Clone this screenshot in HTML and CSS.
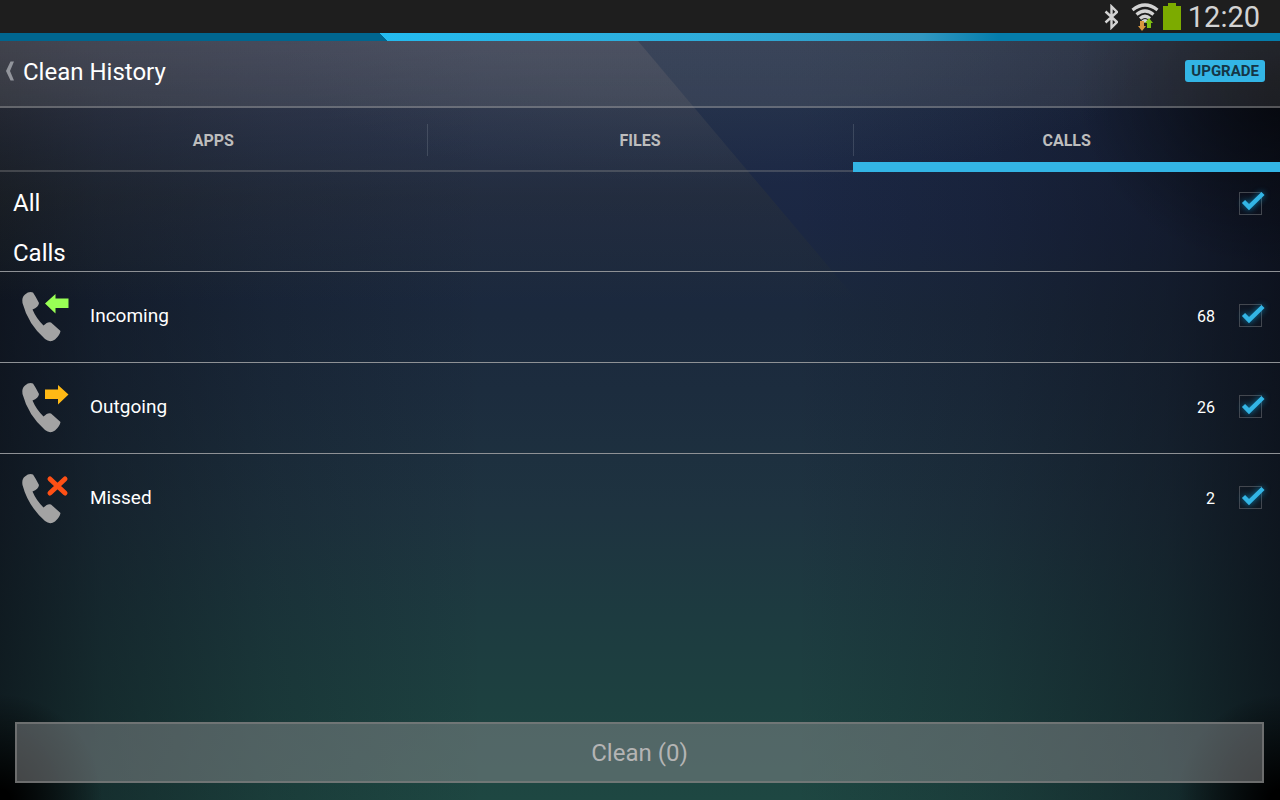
FILE: index.html
```html
<!DOCTYPE html>
<html lang="en">
<head>
<meta charset="utf-8">
<meta name="viewport" content="width=device-width, initial-scale=1">
<title>Clean History</title>
<link rel="stylesheet" href="styles.css">
</head>
<body>
<svg class="defs" width="0" height="0" aria-hidden="true">
  <defs>
    <symbol id="phone" viewBox="0 0 52 54">
      <path d="M7 5.500Q11 2 15 3.500Q18 8 21 14Q20.500 18 14.500 20.500Q18 29 25.500 36.500Q30 32 33 33.500L42.500 42Q42 46 37 50.500Q32 54 27 50Q10 35 4.500 14Q3.500 8 7 5.500Z" fill="#a3a3a3"/>
    </symbol>
    <symbol id="check" viewBox="0 0 36 36">
      <path d="M11.500 16.500L17 22L31 8.500" fill="none" stroke="#33b5e5" stroke-width="4.500"/>
    </symbol>
  </defs>
</svg>
<div class="screen">
  <div class="status">
    <svg width="16" height="26" viewBox="0 0 16 26" aria-label="Bluetooth"><path d="M3.500 7.500L15 18L9.500 23.500V2.500L15 8L3.500 18.500" fill="none" stroke="#d3d3d3" stroke-width="2.400"/></svg>
    <svg class="wifi" width="28" height="28" viewBox="0 0 28 28" aria-label="Wi-Fi">
      <g fill="none" stroke="#d3d3d3" stroke-width="3.200"><path d="M1.500 7Q14 -3 26.500 7"/><path d="M5.500 11.500Q14 4.500 22.500 11.500"/><path d="M9 15.500Q14 11 19 15.500"/></g>
      <path d="M10.500 17.500Q14 14.500 17.500 17.500L14 20Z" fill="#d3d3d3"/>
      <path d="M9 18h4v5h2l-4 5-4-5h2z" fill="#d9963e"/>
      <path d="M16 25v-5h-2l4-5 4 5h-2v5z" fill="#7fc012"/>
    </svg>
    <svg width="18" height="28" viewBox="0 0 18 28" aria-label="Battery full"><path d="M5 0h8v3h5v24H0V3h5z" fill="#7cab00"/></svg>
    <time class="clock">12:20</time>
  </div>
  <div class="strip"></div>
  <div class="app">
    <header class="titlebar">
      <button class="back" type="button">
        <svg width="12" height="20" viewBox="0 0 12 20" aria-hidden="true"><path d="M6.500 .5H10L6 10L10 19.500H6.500L2 10Z" fill="#92959c"/></svg>
        <span>Clean History</span>
      </button>
      <button class="upgrade" type="button">UPGRADE</button>
    </header>
    <nav class="tabs">
      <a class="tab" href="#apps">APPS</a>
      <a class="tab" href="#files">FILES</a>
      <a class="tab active" href="#calls" aria-current="page">CALLS</a>
    </nav>
    <main id="calls">
      <label class="all">
        <span class="name">All</span>
        <span class="tick"><input type="checkbox" checked><svg aria-hidden="true"><use href="#check"/></svg></span>
      </label>
      <h2 class="group">Calls</h2>
      <ul class="list">
        <li><label class="row">
          <svg class="icon" viewBox="0 0 52 54" aria-hidden="true"><use href="#phone"/><path d="M27 14.500L37.500 5v4.500H50.500v9.500H37.500v5.500Z" fill="#99ff55"/></svg>
          <span class="name">Incoming</span><span class="count">68</span>
          <span class="tick"><input type="checkbox" checked><svg aria-hidden="true"><use href="#check"/></svg></span>
        </label></li>
        <li><label class="row">
          <svg class="icon" viewBox="0 0 52 54" aria-hidden="true"><use href="#phone"/><path d="M50.500 14.500L40 5v4.500H27v9.500H40v5.500Z" fill="#ffb915"/></svg>
          <span class="name">Outgoing</span><span class="count">26</span>
          <span class="tick"><input type="checkbox" checked><svg aria-hidden="true"><use href="#check"/></svg></span>
        </label></li>
        <li><label class="row">
          <svg class="icon" viewBox="0 0 52 54" aria-hidden="true"><use href="#phone"/><path d="M32 8L47 22M47 8L32 22" fill="none" stroke="#ff5015" stroke-width="5" stroke-linecap="round"/></svg>
          <span class="name">Missed</span><span class="count">2</span>
          <span class="tick"><input type="checkbox" checked><svg aria-hidden="true"><use href="#check"/></svg></span>
        </label></li>
      </ul>
    </main>
    <footer class="actions"><button class="clean" type="button" disabled>Clean (0)</button></footer>
  </div>
</div>
</body>
</html>
```
FILE: styles.css
```css
* { box-sizing: border-box; }
body { margin: 0; background: #000; color: #fff; font-family: Roboto, "Noto Sans", sans-serif; }
button { margin: 0; padding: 0; border: 0; background: none; color: inherit; font: inherit; }
.defs { position: absolute; }
.screen { min-height: 100vh; display: flex; flex-direction: column; }

.status {
  display: flex; align-items: center; justify-content: flex-end;
  height: 33px; padding-right: 20px; background: #1e1e1e; color: #d3d3d3;
}
.wifi { margin: 0 4px 0 13px; }
.clock { margin-left: 7px; padding-top: 1px; font-size: 29px; line-height: 32px; }

.strip {
  height: 8px;
  background:
    linear-gradient(45deg, #00668f 50%, transparent 52%) 379px 0 / 8px 8px no-repeat,
    linear-gradient(#00668f, #00668f) 0 0 / 379px 8px no-repeat,
    linear-gradient(90deg, #24bbef 30%, #2eacda 55%, #3198c2 72%, #057dab 78%, #057dab);
}

.app {
  position: relative; isolation: isolate;
  flex: 1; display: flex; flex-direction: column;
  background:
    radial-gradient(ellipse 8% 14% at 0% 100%, #000 10%, transparent),
    radial-gradient(ellipse 8% 14% at 100% 100%, #000 10%, transparent),
    radial-gradient(ellipse 16% 24% at 100% 6%, rgba(0, 0, 0, .6), transparent),
    radial-gradient(ellipse 34% 17% at 56% 2%, rgba(75, 90, 95, .16) 40%, transparent),
    linear-gradient(90deg, rgba(10, 13, 20, .7), rgba(10, 13, 20, .42) 8%, rgba(10, 13, 20, .18) 21%, transparent 38%, transparent 62%, rgba(10, 13, 22, .18) 77%, rgba(10, 13, 22, .45) 91%, rgba(8, 10, 18, .72)),
    linear-gradient(#1e2b49, #1b2743 24%, #1b293d 36%, #1c2c3e 46%, #1e3340 62%, #1d3b40 76%, #1d4140 88%, #1e4742);
}
.app::before {
  content: ""; position: absolute; z-index: -1; top: 0; left: 0;
  width: 67%; height: 260px;
  clip-path: polygon(0 0, 638px 0, 100% 100%, 0 100%);
  background: linear-gradient(rgba(100, 95, 105, .36), rgba(80, 82, 80, .22) 40%, rgba(60, 62, 45, .22) 60%, rgba(50, 58, 40, .13) 85%, transparent);
}

.titlebar {
  display: flex; align-items: center; justify-content: space-between;
  height: 67px; padding: 0 15px 6px 4px;
  border-bottom: 2px solid rgba(180, 180, 180, .35);
  background: linear-gradient(rgba(140, 140, 140, .2), rgba(140, 140, 140, .17));
}
.back { display: flex; align-items: center; gap: 7px; font-size: 24px; line-height: 32px; }
.back span { padding-top: 2px; }
.upgrade {
  height: 22px; padding: 0 6px; border-radius: 3px;
  background: #33b5e5; color: #153645; font-size: 15px; font-weight: 700; line-height: 22px;
}

.tabs { display: flex; height: 64px; }
.tab {
  flex: 1; padding-top: 16px; border-bottom: 2px solid rgba(140, 140, 140, .35);
  background: linear-gradient(rgba(160, 170, 180, .22), rgba(160, 170, 180, .22)) 0 16px / 1px 32px no-repeat;
  color: #bdbdbd; font-size: 16px; font-weight: 700; line-height: 34px;
  text-align: center; text-decoration: none;
}
.tab:first-child { background: none; }
.tab.active { border-bottom: 10px solid #33b5e5; }

.all {
  display: flex; align-items: center; justify-content: space-between;
  height: 62px; padding: 0 12px 0 13px; font-size: 24px;
}
.group {
  margin: 0; height: 38px; padding-left: 13px; border-bottom: 1px solid #8e9195;
  font-size: 24px; font-weight: 400; line-height: 38px;
}
.list { margin: 0; padding: 0; list-style: none; }
.row {
  display: flex; align-items: center;
  height: 91px; padding: 0 12px 3px 18px; border-bottom: 1px solid #8e9195;
}
.list li:last-child .row { border-bottom-color: transparent; }
.icon { width: 52px; height: 54px; margin-right: 20px; }
.row .name { flex: 1; font-size: 19px; }
.count { margin-right: 17px; padding-top: 1px; font-size: 16px; }

.tick { display: grid; width: 36px; height: 36px; }
.tick input, .tick svg { grid-area: 1 / 1; }
.tick input {
  appearance: none; width: 23px; height: 23px; margin: 0;
  place-self: center; border: 1px solid #43474f; outline: 0;
}
.tick svg { width: 36px; height: 36px; pointer-events: none; visibility: hidden; filter: drop-shadow(0 0 3px #0b7fae); }
.tick input:checked + svg { visibility: visible; }

.actions { margin-top: auto; padding: 0 16px 17px 15px; }
.clean {
  display: block; width: 100%; height: 61px;
  border: 2px solid rgba(125, 125, 125, .7);
  background: rgba(140, 142, 145, .48);
  color: #b4b4b4; font-size: 24px;
}
```
